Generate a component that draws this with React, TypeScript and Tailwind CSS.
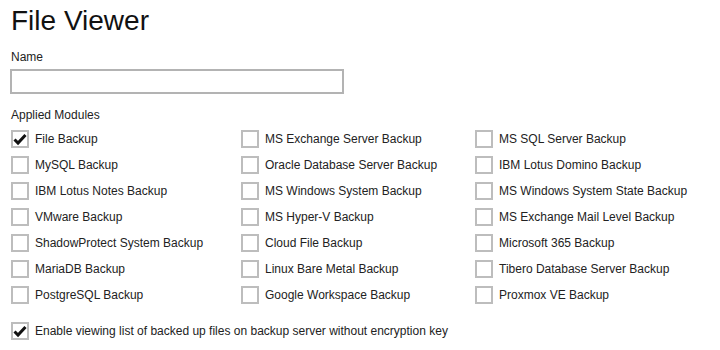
import React from "react";

const cols: { label: string; checked?: boolean }[][] = [
  [
    { label: "File Backup", checked: true },
    { label: "MySQL Backup" },
    { label: "IBM Lotus Notes Backup" },
    { label: "VMware Backup" },
    { label: "ShadowProtect System Backup" },
    { label: "MariaDB Backup" },
    { label: "PostgreSQL Backup" },
  ],
  [
    { label: "MS Exchange Server Backup" },
    { label: "Oracle Database Server Backup" },
    { label: "MS Windows System Backup" },
    { label: "MS Hyper-V Backup" },
    { label: "Cloud File Backup" },
    { label: "Linux Bare Metal Backup" },
    { label: "Google Workspace Backup" },
  ],
  [
    { label: "MS SQL Server Backup" },
    { label: "IBM Lotus Domino Backup" },
    { label: "MS Windows System State Backup" },
    { label: "MS Exchange Mail Level Backup" },
    { label: "Microsoft 365 Backup" },
    { label: "Tibero Database Server Backup" },
    { label: "Proxmox VE Backup" },
  ],
];

function Box({ checked }: { checked?: boolean }) {
  return (
    <span className="relative inline-block w-[18px] h-[18px] border-2 border-[#bdbdbd] bg-white shrink-0">
      {checked && (
        <svg viewBox="0 0 18 18" className="absolute left-[-2px] top-[-2px] w-[18px] h-[18px]">
          <path d="M3.5 9.5 L7 13 L14.5 5" fill="none" stroke="#111" strokeWidth="3" strokeLinecap="butt" strokeLinejoin="miter" />
        </svg>
      )}
    </span>
  );
}

function Item({ label, checked }: { label: string; checked?: boolean }) {
  return (
    <div className="flex items-center h-[26px] gap-[6px]">
      <Box checked={checked} />
      <span className="text-[12px] text-[#222]">{label}</span>
    </div>
  );
}

export default function App() {
  return (
    <div className="w-[720px] h-[350px] bg-white pl-[11px] pt-[3px]" style={{ fontFamily: '"Liberation Sans", Arial, sans-serif' }}>
      <h1 className="text-[28px] leading-[36px] text-[#111] font-normal">File Viewer</h1>
      <div className="mt-[11px] text-[12px] leading-[14px] text-[#222]">Name</div>
      <div className="mt-[5px] w-[334px] h-[25px] border-2 border-[#b3b3b3] -ml-[1px]" />
      <div className="mt-[14px] text-[12px] leading-[14px] text-[#222]">Applied Modules</div>
      <div className="mt-[4px] grid grid-cols-[230px_234px_1fr]">
        {cols.map((c, i) => (
          <div key={i} className="flex flex-col">
            {c.map((it) => (
              <Item key={it.label} label={it.label} checked={it.checked} />
            ))}
          </div>
        ))}
      </div>
      <div className="mt-[10px]">
        <Item label="Enable viewing list of backed up files on backup server without encryption key" checked />
      </div>
    </div>
  );
}
